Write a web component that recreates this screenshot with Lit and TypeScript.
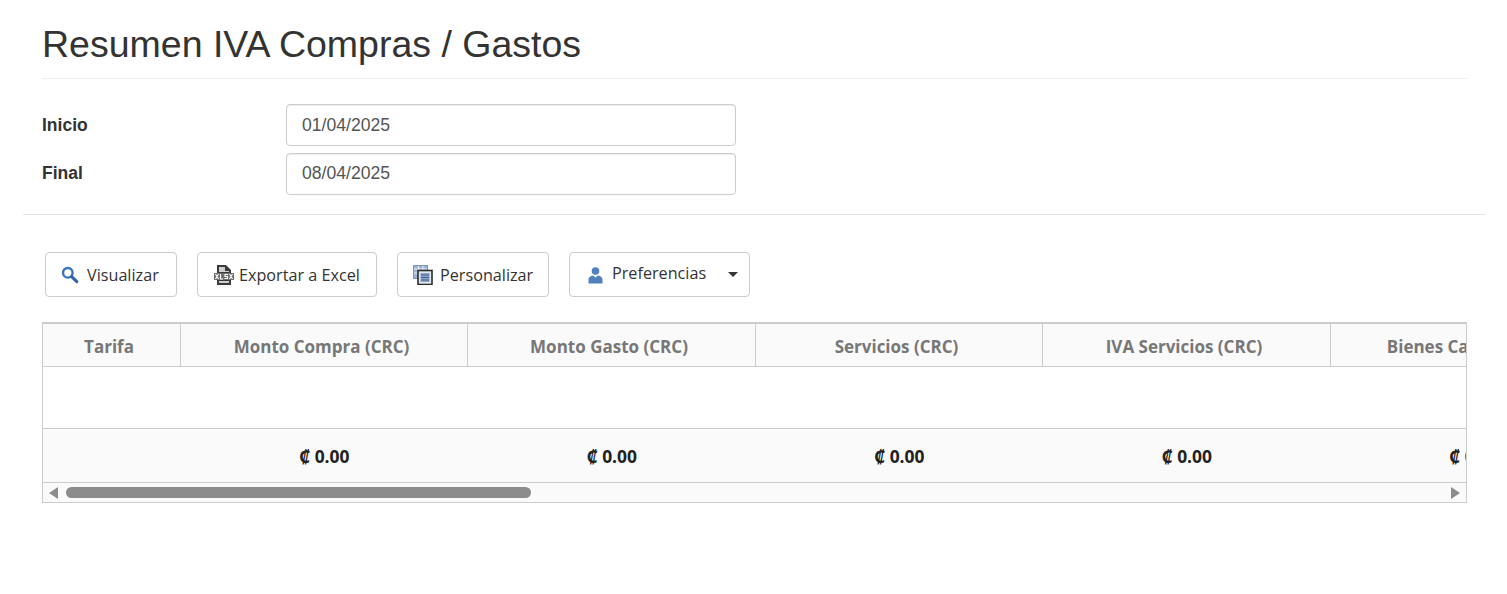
import { LitElement, html, css, svg } from "lit";
import { customElement } from "lit/decorators.js";

const cols = [
  ["Tarifa", 138, ""],
  ["Monto Compra (CRC)", 287, "₡ 0.00"],
  ["Monto Gasto (CRC)", 288, "₡ 0.00"],
  ["Servicios (CRC)", 287, "₡ 0.00"],
  ["IVA Servicios (CRC)", 288, "₡ 0.00"],
  ["Bienes Capital (CRC)", 287, "₡ 0.00"],
] as const;

const searchIcon = svg`<svg class="ic" width="18" height="18" viewBox="0 0 18 18"><circle cx="6.800" cy="6.800" r="4.800" fill="#fff" stroke="#3a72c4" stroke-width="2.400"/><path d="M10.600 10.600L15.800 15.600" stroke="#2f62ad" stroke-width="3" stroke-linecap="round"/></svg>`;
const xlsIcon = svg`<svg class="ic" width="20" height="22" viewBox="0 0 20 22"><path d="M3 9V1h9l5 5v3zM3 16h14v5H3z" fill="#3a3a3a"/><path d="M5 8V3h6v4h4v1zM5 17h10v2H5z" fill="#cfcfcf"/><rect x="0" y="9" width="20" height="7" fill="#6e6e6e"/><path d="M1.500 10l3 5M4.500 10l-3 5M6.500 10v5h2.500M14 10.500h-3v2h2.500v2H10.500M15.500 10l3 5M18.500 10l-3 5" fill="none" stroke="#fff" stroke-width="1.100"/></svg>`;
const custIcon = svg`<svg class="ic" width="20" height="20" viewBox="0 0 20 20"><rect x="0.500" y="0.500" width="14" height="13" fill="#9db6d8" stroke="#7f93b3"/><path d="M1 4h13M5.500 1v12M10 1v12M1 8h13" stroke="#e8eef7" stroke-width="1"/><rect x="5" y="5.500" width="14" height="14" fill="#e4e8ee" stroke="#2c2c2c" stroke-width="1.600"/><rect x="7.500" y="8" width="9" height="9" fill="#8fa6c8"/><path d="M8 10h8M8 12.500h8M8 15h8" stroke="#3f5f92" stroke-width="1"/></svg>`;
const userIcon = svg`<svg class="ic" width="15" height="18" viewBox="0 0 15 18"><circle cx="7.500" cy="5" r="3.800" fill="#4f81bd"/><path d="M.500 17.500v-4C.500 11 3 10 5 9.500l2.500 2 2.500-2c2 .5 4.500 1.500 4.500 4v4z" fill="#4f81bd"/></svg>`;

@customElement("app-root")
export class AppRoot extends LitElement {
  static styles = css`
    :host { display: block; background: #fff; height: 594px; overflow: hidden; font-family: "Liberation Sans", Arial, sans-serif; color: #333; }
    .head { margin: 0 40px 0 42px; height: 79px; box-sizing: border-box; border-bottom: 1px solid #eee; }
    h1 { margin: 0; padding-top: 24px; font-size: 37.500px; line-height: 40px; font-weight: 400; color: #333; }
    .form { padding: 25px 0 0 42px; display: flex; flex-direction: column; gap: 7px; }
    .row { display: flex; align-items: center; height: 42px; }
    .row.second label { padding-bottom: 2px; }
    .row.second .input { padding-bottom: 2px; }
    label { width: 244px; font-size: 17.500px; font-weight: 700; color: #333; }
    .input { width: 450px; height: 42px; box-sizing: border-box; border: 1px solid #ccc; border-radius: 4px; padding: 0 15px; display: flex; align-items: center; font-size: 17.600px; color: #555; box-shadow: inset 0 1px 1px rgba(0,0,0,.075); }
    hr { margin: 19px 21px 0 23px; border: 0; border-top: 1px solid #e4e4e4; height: 0; }
    .bar { display: flex; margin: 37px 0 0 45px; height: 45px; align-items: stretch; }
    .btn { box-sizing: border-box; height: 45px; border: 1px solid #ccc; border-radius: 4px; background: #fff; display: flex; align-items: center; font-family: "Open Sans", "Noto Sans", sans-serif; font-size: 16.200px; color: #333; white-space: nowrap; }
    .ic { flex: none; }
    .b1 { width: 132px; margin-right: 20px; gap: 8px; padding-left: 15px; }
    .b2 { width: 180px; margin-right: 20px; padding-left: 16px; gap: 5px; }
    .b3 { width: 152px; margin-right: 20px; padding-left: 15px; gap: 7px; }
    .b4 { width: 181px; padding-left: 18px; gap: 9px; }
    .b4 span.t { position: relative; top: -2px; }
    .caret { width: 0; height: 0; border-left: 5px solid transparent; border-right: 5px solid transparent; border-top: 5px solid #333; margin-left: 13px; }
    .grid { margin: 25px 40px 0 42px; height: 181px; box-sizing: border-box; border: 1px solid #ccc; border-top-width: 2px; overflow: hidden; font-family: "Open Sans", "Noto Sans", sans-serif; }
    .tr { display: flex; width: 1700px; }
    .cell { flex: none; box-sizing: border-box; display: flex; align-items: center; justify-content: center; white-space: nowrap; }
    .th { height: 43px; box-sizing: border-box; background: #fafafa; border-bottom: 1px solid #ccc; }
    .th .cell { height: 42px; border-right: 1px solid #ccc; font-size: 17px; font-weight: 700; color: #777; padding: 2px 5px 0 0; }
    .body { height: 61px; border-bottom: 1px solid #ccc; }
    .foot { height: 54px; box-sizing: border-box; background: #fafafa; border-bottom: 1px solid #ccc; }
    .foot .cell { height: 53px; font-size: 17.400px; font-weight: 700; color: #222; }
    .scroll { height: 19px; background: #fafafa; display: flex; align-items: center; }
    .arrow { width: 0; height: 0; border-top: 6px solid transparent; border-bottom: 6px solid transparent; flex: none; }
    .al { border-right: 9px solid #8c8c8c; margin-left: 6px; }
    .ar { border-left: 9px solid #8c8c8c; margin-left: auto; margin-right: 6px; }
    .thumb { width: 465px; height: 11px; border-radius: 6px; background: #8c8c8c; margin-left: 8px; }
  `;

  render() {
    return html`
      <div class="head"><h1>Resumen IVA Compras / Gastos</h1></div>
      <div class="form">
        <div class="row"><label>Inicio</label><div class="input">01/04/2025</div></div>
        <div class="row second"><label>Final</label><div class="input">08/04/2025</div></div>
      </div>
      <hr />
      <div class="bar">
        <div class="btn b1">${searchIcon}<span>Visualizar</span></div>
        <div class="btn b2">${xlsIcon}<span>Exportar a Excel</span></div>
        <div class="btn b3">${custIcon}<span>Personalizar</span></div>
        <div class="btn b4">${userIcon}<span class="t">Preferencias</span><span class="caret"></span></div>
      </div>
      <div class="grid">
        <div class="tr th">${cols.map(([t, w]) => html`<div class="cell" style="width:${w}px">${t}</div>`)}</div>
        <div class="body"></div>
        <div class="tr foot">${cols.map(([, w, f]) => html`<div class="cell" style="width:${w}px">${f}</div>`)}</div>
        <div class="scroll"><span class="arrow al"></span><span class="thumb"></span><span class="arrow ar"></span></div>
      </div>
    `;
  }
}
